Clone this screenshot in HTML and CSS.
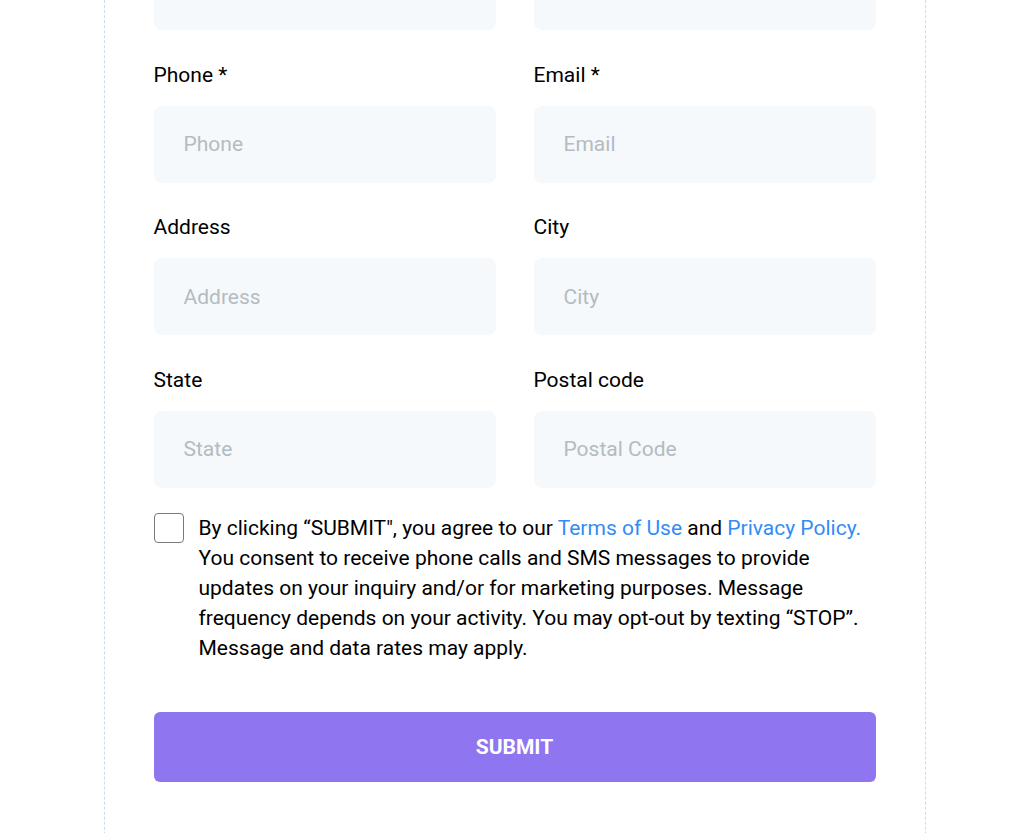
FILE: index.html
```html
<!DOCTYPE html>
<html lang="en">
<head>
<meta charset="utf-8">
<title>Contact form</title>
<link rel="stylesheet" href="styles.css">
</head>
<body>
<main class="frame">
  <form class="form">
    <div class="grid">
      <label class="field"><span class="label">First name *</span><input class="input" placeholder="First Name"></label>
      <label class="field"><span class="label">Last name *</span><input class="input" placeholder="Last Name"></label>
      <label class="field"><span class="label">Phone *</span><input class="input" placeholder="Phone"></label>
      <label class="field"><span class="label">Email *</span><input class="input" placeholder="Email"></label>
      <label class="field"><span class="label">Address</span><input class="input" placeholder="Address"></label>
      <label class="field"><span class="label">City</span><input class="input" placeholder="City"></label>
      <label class="field"><span class="label">State</span><input class="input" placeholder="State"></label>
      <label class="field"><span class="label">Postal code</span><input class="input" placeholder="Postal Code"></label>
    </div>
    <div class="consent">
      <span class="checkbox"></span>
      <p class="consent-text">By clicking “SUBMIT", you agree to our <a class="link" href="#">Terms of Use</a> and <a class="link" href="#">Privacy Policy.</a> You consent to receive phone calls and SMS messages to provide updates on your inquiry and/or for marketing purposes. Message frequency depends on your activity. You may opt-out by texting “STOP”. Message and data rates may apply.</p>
    </div>
    <button class="submit" type="button">SUBMIT</button>
  </form>
</main>
</body>
</html>
```

FILE: styles.css
```css
html, body {
  margin: 0;
  padding: 0;
  background: #ffffff;
  font-family: Roboto, "Liberation Sans", sans-serif;
  color: #000000;
}
body {
  overflow: hidden;
  height: 833px;
  padding-left: 1px;
}
.frame {
  box-sizing: content-box;
  width: 722px;
  margin: -90px auto 0;
  padding: 0 49px 80px;
  border-left: 1px dashed #c9dce8;
  border-right: 1px dashed #c9dce8;
  min-height: 1000px;
}
.form {
  display: flex;
  flex-direction: column;
}
.grid {
  display: grid;
  grid-template-columns: 1fr 1fr;
  column-gap: 38px;
  row-gap: 32.5px;
}
.field {
  display: flex;
  flex-direction: column;
  gap: 19px;
}
.label {
  font-size: 21px;
  line-height: 24px;
  color: #000000;
}
.input {
  box-sizing: border-box;
  height: 77px;
  width: 100%;
  border: none;
  border-radius: 8px;
  background: #f5f9fc;
  padding: 0 30px;
  font-family: inherit;
  font-size: 21px;
  color: #000000;
  outline: none;
}
.input::placeholder {
  color: #b4bbc1;
}
.consent {
  display: flex;
  align-items: flex-start;
  gap: 15px;
  margin-top: 25px;
}
.checkbox {
  flex: none;
  box-sizing: border-box;
  width: 30px;
  height: 30px;
  border: 1.5px solid #7a7a7a;
  border-radius: 4px;
  background: #ffffff;
}
.consent-text {
  margin: 0;
  font-size: 21px;
  line-height: 30px;
  color: #000000;
}
.link {
  color: #338cf5;
  text-decoration: none;
}
.submit {
  margin-top: 49px;
  height: 70px;
  width: 100%;
  border: none;
  border-radius: 6px;
  background: #8f76f0;
  color: #ffffff;
  font-family: inherit;
  font-size: 21px;
  font-weight: 700;
  cursor: pointer;
}
```
